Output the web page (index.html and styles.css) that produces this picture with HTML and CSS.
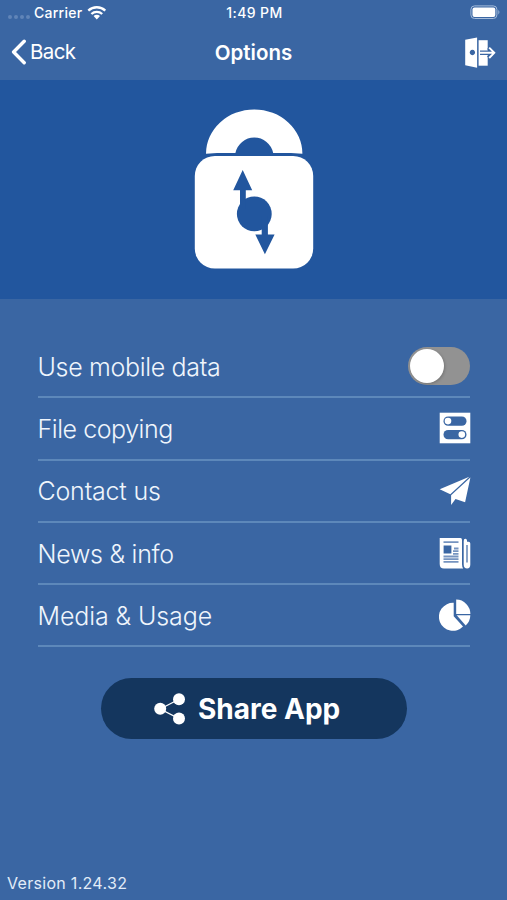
FILE: index.html
```html
<!DOCTYPE html>
<html lang="en">
<head>
<meta charset="utf-8">
<title>Options</title>
<link rel="stylesheet" href="styles.css">
</head>
<body>
<div class="screen">
  <header class="top">
    <div class="status">
      <div class="carrier">
        <span class="signal"><i></i><i></i><i></i><i></i></span>
        <span class="carrier-name">Carrier</span>
        <svg class="wifi" width="20" height="15" viewBox="0 0 20 15"><g fill="none" stroke="#fff" stroke-width="2.3"><path d="M1.3 5.6a12.4 12.4 0 0 1 17 0"/><path d="M4.4 9a7.8 7.8 0 0 1 10.8 0"/></g><path fill="#fff" d="M6.6 11.1a4.6 4.6 0 0 1 6.4 0L9.8 14.4z"/></svg>
      </div>
      <span class="time">1:49 PM</span>
      <svg class="battery" width="31" height="15" viewBox="0 0 31 15"><rect x=".9" y=".9" width="26" height="12.6" rx="3.6" fill="none" stroke="#a5bcdb" stroke-width="1"/><rect x="2.5" y="2.5" width="22.8" height="9.4" rx="2" fill="#fff"/><path fill="#a5bcdb" d="M28.4 5q2 2.2 0 4.4z"/></svg>
    </div>
    <nav class="nav">
      <a class="back"><svg width="17" height="26" viewBox="0 0 17 26"><path d="M15.200 2.300 4.600 13l10.600 10.700" fill="none" stroke="#fff" stroke-width="3.400" stroke-linecap="round" stroke-linejoin="round"/></svg><span class="back-label">Back</span></a>
      <h1 class="title">Options</h1>
      <svg class="exit" width="32" height="32" viewBox="0 0 32 32"><path fill="#fff" fill-rule="evenodd" d="M1.200 2.800 13.100.600v30.200L1.200 28.300zM8.400 12.800a2.700 2.700 0 1 0 .01 0z"/><path fill="#fff" d="M14.600 3.200h9.100v25.500h-9.100z"/><path d="M16 15.800h12.500M24.600 10.500l5.500 5.300-5.500 5.300" fill="none" stroke="#3a66a3" stroke-width="4.400"/><path d="M16 15.800h13.500M25.200 10.600l5.100 5.200-5.100 5.200" fill="none" stroke="#fff" stroke-width="1.900"/></svg>
    </nav>
  </header>
  <section class="hero">
    <svg width="120" height="162" viewBox="0 0 120 162"><path fill="#fff" d="M12 44.800a48.200 44.400 0 0 1 96.400 0L104.500 44.600Q101 44 97 44H79.200a19.300 19.300 0 0 0-37.800 0H23Q19 44 16 44.600z"/><rect x=".8" y="47" width="118.400" height="112.600" rx="20" fill="#fff"/><g fill="#22569e"><circle cx="60.300" cy="104.900" r="17.400"/><path d="M48.700 61 58.200 81.200h-6.400V100H46V81.200h-6.800zM70.900 145.200 80.600 125.500h-6.700v-18h-6.200v18h-6.400z"/></g></svg>
  </section>
  <ul class="options">
    <li><span class="t-data">Use mobile data</span><span class="switch"></span></li>
    <li><span class="t-copy">File copying</span><svg width="32" height="32" viewBox="0 0 32 32"><path fill="#fff" d="M.7.7h30.600v30.600H.7z"/><g fill="#3a66a3"><rect x="4.500" y="4.500" width="23" height="9.300" rx="4.600"/><rect x="4.500" y="18" width="23" height="9.300" rx="4.600"/></g><g fill="#fff"><circle cx="9" cy="9.100" r="3.300"/><circle cx="22.800" cy="22.600" r="3.300"/></g></svg></li>
    <li><span class="t-contact">Contact us</span><svg width="32" height="32" viewBox="0 0 32 32"><path fill="#fff" d="M30.300 1.800.7 14.200l10.600 5.100zM31.400 2.400 12.100 20.200v9.700l4.400-6 9.600 3.400z"/></svg></li>
    <li><span class="t-news">News &amp; info</span><svg width="32" height="32" viewBox="0 0 32 32"><path fill="#fff" d="M.7.900h20.800q1.500 0 1.500 2v24.400q0 2.400 1.200 4.200H5Q.7 31.500.7 27zM24.700 4q0-2.300 1.700-2.300 1.700 0 1.700 3h1.500q1.700 0 1.700 1.800v21q0 4-3.200 4-3.400 0-3.400-4z"/><path d="M28 8v17.500" stroke="#3a66a3" stroke-width="1.200"/><path fill="#3a66a3" d="M4.600 8.500h7.800v8H4.600z"/><g stroke="#7694c0" stroke-width="1.800"><path d="M4.500 5.200h15M4.500 19.500h15M4.500 22.200h15M4.500 24.900h15M15 11.500h4.500M14 14.200h5.500M14 16.900h5.500"/></g></svg></li>
    <li><span class="t-media">Media &amp; Usage</span><svg width="32" height="32" viewBox="0 0 32 32"><g fill="#fff"><path d="M14.700 3.800V17.200L24 27.500A14 14 0 1 1 14.700 3.800z"/><path d="M17.200.6A14.400 14.400 0 0 1 31.400 15H17.200z"/><path d="M17.700 16.300h13.600q0 6-4.600 10.300z"/></g></svg></li>
  </ul>
  <button class="share"><svg width="32" height="32" viewBox="0 0 32 32"><path d="M25 6.200 6.200 16 25 25.600" fill="none" stroke="#fff" stroke-width="1.200"/><g fill="#fff"><circle cx="25" cy="6.200" r="6"/><circle cx="6.200" cy="15.800" r="6"/><circle cx="25" cy="25.500" r="6"/></g></svg><span class="share-label">Share App</span></button>
  <footer class="version">Version 1.24.32</footer>
</div>
</body>
</html>
```
FILE: styles.css
```css
* { box-sizing: border-box; }
body { margin: 0; background: #3a66a3; color: #fff; font-family: Inter, "Liberation Sans", sans-serif; }
.screen { width: 507px; height: 900px; display: flex; flex-direction: column; overflow: hidden; }
svg { display: block; flex: none; }
.top { height: 80px; flex: none; }
.status { height: 26px; display: grid; grid-template-columns: 1fr auto 1fr; align-items: center; padding: 0 6px 1px 8px; font-size: 14px; font-weight: 500; }
.carrier { display: flex; align-items: center; letter-spacing: .25px; }
.time { letter-spacing: .4px; }
.signal { display: flex; gap: 2px; width: 26px; padding-top: 8px; }
.signal i { width: 4px; height: 4px; border-radius: 50%; background: #6085b8; }
.wifi { margin-left: 5px; }
.battery { justify-self: end; }
.nav { height: 52px; display: grid; grid-template-columns: 1fr auto 1fr; align-items: center; padding: 0 11px 0 9px; }
.back { display: flex; align-items: center; gap: 4px; font-size: 20.5px; height: 50px; letter-spacing: -.6px; padding-bottom: 1px; }
.title { margin: 0; font-size: 20.5px; font-weight: 600; line-height: 26px; padding: 1px 0 0 2px; }
.exit { justify-self: end; margin-top: 1px; }
.hero { height: 219px; flex: none; background: #22569e; display: flex; justify-content: center; padding-top: 29px; }
.options { list-style: none; margin: 37px 37px 0 37.5px; padding: 0; font-size: 25px; font-weight: 300; color: #eff5fc; }
.options li { height: 62.3px; display: flex; justify-content: space-between; align-items: center; border-bottom: 2px solid #5d88ba; }
.options li > span:first-child { margin-top: 1px; }
.options li > svg { margin-right: -1px; }
.t-data { letter-spacing: -.33px; }
.t-copy { letter-spacing: -.45px; }
.t-contact { letter-spacing: -.2px; }
.t-news { letter-spacing: -.27px; }
.t-media { letter-spacing: -.1px; }
.switch { width: 62px; height: 38px; border-radius: 19px; background: #929292; display: flex; align-items: center; padding-left: 2px; }
.switch::before { content: ""; width: 34px; height: 34px; border-radius: 50%; background: #fff; box-shadow: 1px 1px 3px #0003; }
.share { width: 306px; height: 61px; margin: 30.500px 0 0 101px; padding: 2px 0 0 53px; border: 0; border-radius: 31px; background: #14365e; color: #fff; font: 700 28px Inter, sans-serif; display: flex; align-items: center; gap: 12px; }
.version { margin-top: auto; padding: 0 7px 7px; font-size: 16px; line-height: 20px; letter-spacing: .3px; color: #e2ecf8; }
```
